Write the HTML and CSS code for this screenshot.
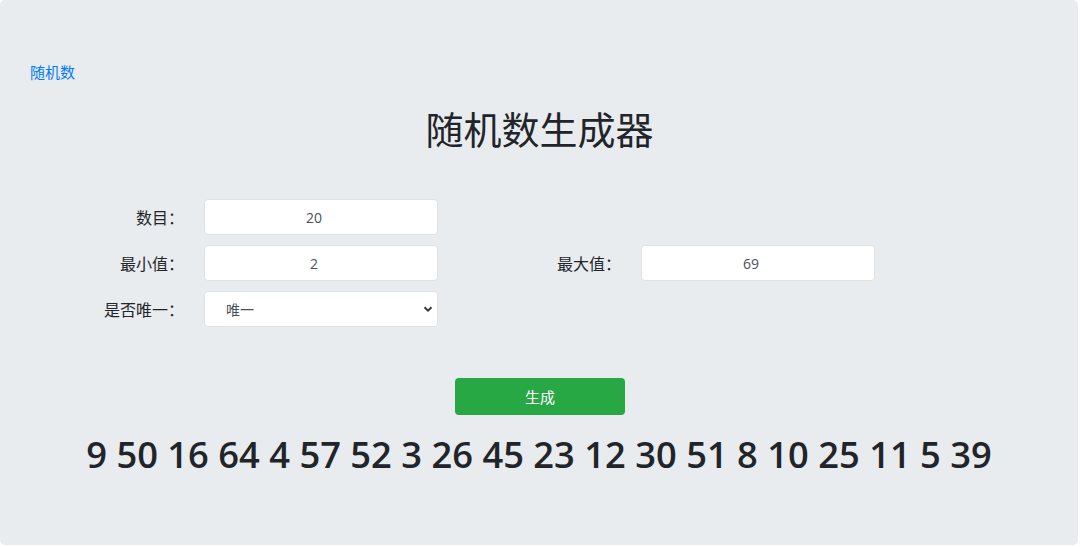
FILE: index.html
```html
<!DOCTYPE html>
<html lang="zh">
<head>
<meta charset="utf-8">
<title>随机数生成器</title>
<link rel="stylesheet" href="styles.css">
</head>
<body>
<div class="jumbotron">
  <a class="nav-link" href="#">随机数</a>
  <h1 class="title">随机数生成器</h1>
  <form class="form">
    <div class="form-row">
      <div class="field">
        <label class="label" for="count">数目：</label>
        <input class="control" id="count" type="text" value="20">
      </div>
    </div>
    <div class="form-row">
      <div class="field">
        <label class="label" for="min">最小值：</label>
        <input class="control" id="min" type="text" value="2">
      </div>
      <div class="field">
        <label class="label" for="max">最大值：</label>
        <input class="control" id="max" type="text" value="69">
      </div>
    </div>
    <div class="form-row">
      <div class="field">
        <label class="label" for="uniq">是否唯一：</label>
        <div class="select-wrap">
          <select class="control select" id="uniq">
            <option>唯一</option>
            <option>不唯一</option>
          </select>
          <svg class="chevron" width="10" height="8" viewBox="0 0 10 8"><path d="M1.5 2.2 L5 5.6 L8.5 2.2" fill="none" stroke="#343a40" stroke-width="2"/></svg>
        </div>
      </div>
    </div>
    <div class="actions">
      <button class="btn" type="button">生成</button>
    </div>
  </form>
  <div class="result">9 50 16 64 4 57 52 3 26 45 23 12 30 51 8 10 25 11 5 39</div>
</div>
</body>
</html>
```

FILE: styles.css
```css
* { box-sizing: border-box; }
html, body {
  margin: 0;
  padding: 0;
  background: #ffffff;
}
body {
  font-family: "Open Sans", "Noto Sans CJK SC", sans-serif;
  color: #212529;
}
.jumbotron {
  width: 1078px;
  height: 545px;
  background: #e9ecef;
  border-radius: 5px;
  padding: 62px 30px 0 30px;
  display: flex;
  flex-direction: column;
}
.nav-link {
  display: block;
  align-self: flex-start;
  font-family: "Noto Sans CJK SC", sans-serif;
  font-size: 15px;
  line-height: 20px;
  color: #007bff;
  text-decoration: none;
}
.title {
  margin: 23px 0 0 1px;
  text-align: center;
  font-family: "Noto Sans CJK SC", sans-serif;
  font-weight: 400;
  font-size: 38px;
  line-height: 46px;
  color: #212529;
}
.form {
  margin-top: 48px;
  display: flex;
  flex-direction: column;
  gap: 10px;
  padding-left: 1px;
}
.form-row {
  display: flex;
  gap: 30px;
}
.field {
  display: flex;
  align-items: center;
  gap: 20px;
  width: 407px;
}
.label {
  width: 153px;
  text-align: right;
  font-family: "Noto Sans CJK SC", sans-serif;
  font-size: 16px;
  line-height: 24px;
  color: #212529;
}
.control {
  width: 234px;
  height: 36px;
  border: 1px solid #dfe3e7;
  border-radius: 4px;
  background: #ffffff;
  font-family: "Open Sans", "Noto Sans CJK SC", sans-serif;
  font-size: 14px;
  color: #495057;
  text-align: center;
  padding: 0 26px 0 12px;
  outline: none;
}
.select-wrap {
  position: relative;
  width: 234px;
  height: 36px;
}
.select {
  appearance: none;
  -webkit-appearance: none;
  text-align: left;
  padding-left: 21px;
  font-family: "Noto Sans CJK SC", sans-serif;
}
.chevron {
  position: absolute;
  right: 5px;
  top: 14px;
  pointer-events: none;
}
.actions {
  margin-top: 41px;
  display: flex;
  justify-content: center;
  padding-left: 1px;
}
.btn {
  width: 170px;
  height: 37px;
  border: none;
  border-radius: 4px;
  background: #28a745;
  color: #ffffff;
  font-family: "Noto Sans CJK SC", sans-serif;
  font-size: 15px;
  cursor: pointer;
}
.result {
  margin-top: 17px;
  text-align: center;
  font-family: "Open Sans", sans-serif;
  font-weight: 600;
  font-size: 36.3px;
  line-height: 44px;
  color: #212529;
}
```
